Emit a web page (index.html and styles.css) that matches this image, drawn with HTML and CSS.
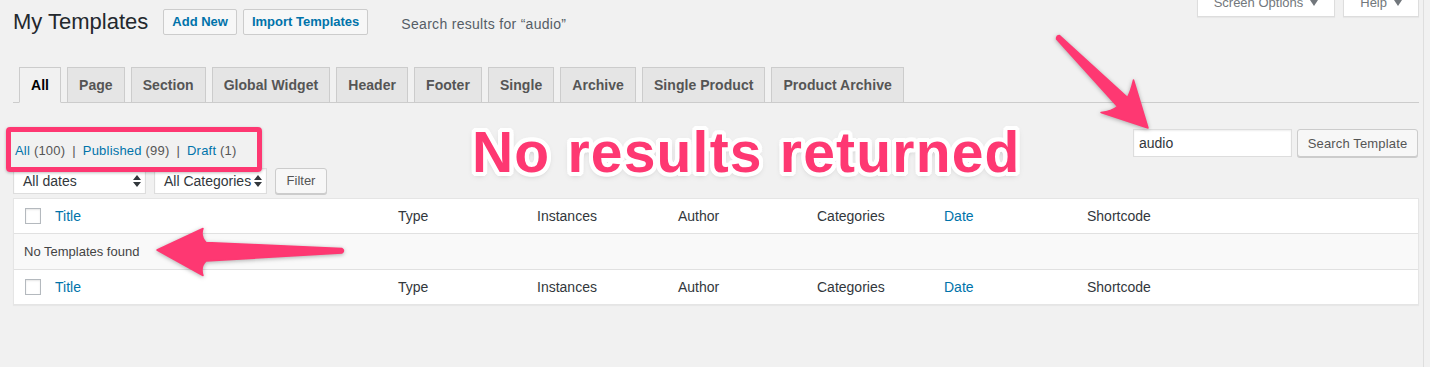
FILE: index.html
```html
<!DOCTYPE html>
<html lang="en">
<head>
  <meta charset="UTF-8">
  <title>My Templates</title>
  <link rel="stylesheet" href="styles.css">
</head>
<body>
  <div class="wrap">

    <div class="top">
      <div class="heading">
        <h1>My Templates</h1>
        <a class="title-action" href="#">Add New</a>
        <a class="title-action" href="#">Import Templates</a>
        <span class="subtitle">Search results for “audio”</span>
      </div>
      <div class="screen-meta">
        <button class="meta-link">Screen Options <span class="caret"></span></button>
        <button class="meta-link">Help <span class="caret"></span></button>
      </div>
    </div>

    <nav class="tabs">
      <a class="tab active" href="#">All</a>
      <a class="tab" href="#">Page</a>
      <a class="tab" href="#">Section</a>
      <a class="tab" href="#">Global Widget</a>
      <a class="tab" href="#">Header</a>
      <a class="tab" href="#">Footer</a>
      <a class="tab" href="#">Single</a>
      <a class="tab" href="#">Archive</a>
      <a class="tab" href="#">Single Product</a>
      <a class="tab" href="#">Product Archive</a>
    </nav>

    <div class="list-top">
      <ul class="subsubsub">
        <li><a href="#">All</a> <span class="count">(100)</span></li>
        <li class="sep">|</li>
        <li><a href="#">Published</a> <span class="count">(99)</span></li>
        <li class="sep">|</li>
        <li><a href="#">Draft</a> <span class="count">(1)</span></li>
        <!-- annotation frame -->
        <span class="note-box"></span>
      </ul>
      <div class="search-box">
        <input type="search" value="audio">
        <button class="btn search">Search Template</button>
      </div>
    </div>

    <div class="tablenav">
      <div class="select dates">All dates
        <svg width="8" height="12" viewBox="0 0 8 12"><path d="M4 0 L8 5 H0 Z M4 12 L0 7 H8 Z" fill="#32373c"/></svg>
      </div>
      <div class="select cats">All Categories
        <svg width="8" height="12" viewBox="0 0 8 12"><path d="M4 0 L8 5 H0 Z M4 12 L0 7 H8 Z" fill="#32373c"/></svg>
      </div>
      <button class="btn filter">Filter</button>
    </div>

    <table class="list-table">
      <colgroup>
        <col style="width:31px">
        <col style="width:343px">
        <col style="width:139px">
        <col style="width:141px">
        <col style="width:139px">
        <col style="width:127px">
        <col style="width:143px">
        <col>
      </colgroup>
      <thead>
        <tr>
          <th class="cb"><span class="check"></span></th>
          <th><a href="#">Title</a></th>
          <th>Type</th>
          <th>Instances</th>
          <th>Author</th>
          <th>Categories</th>
          <th><a href="#">Date</a></th>
          <th>Shortcode</th>
        </tr>
      </thead>
      <tbody>
        <tr class="empty">
          <td colspan="8">No Templates found</td>
        </tr>
      </tbody>
      <tfoot>
        <tr>
          <th class="cb"><span class="check"></span></th>
          <th><a href="#">Title</a></th>
          <th>Type</th>
          <th>Instances</th>
          <th>Author</th>
          <th>Categories</th>
          <th><a href="#">Date</a></th>
          <th>Shortcode</th>
        </tr>
      </tfoot>
    </table>

    <!-- screenshot annotations -->
    <div class="note-text">No results returned</div>
    <svg class="arrows" width="1430" height="367" viewBox="0 0 1430 367">
      <path d="M1148 128 L1101 112.5 Q1112 111 1117.5 106.5 L1056.5 39 Q1056.5 35.5 1059.5 35.5 L1127.5 97.5 Q1131 91 1133.5 80 Z"/>
      <path d="M157 250 L203 228.5 Q200 236 206 242.5 L342 248.5 Q345 250.5 342 253 L206 261 Q200 267 203 275.5 Z"/>
    </svg>

  </div>
</body>
</html>
```

FILE: styles.css
```css
* {
  margin: 0;
  padding: 0;
  box-sizing: border-box;
}

body {
  background-color: #f1f1f1;
  font-family: "Liberation Sans", Arial, sans-serif;
  font-size: 13px;
  color: #444;
  overflow: hidden;
}

a {
  color: #0073aa;
  text-decoration: none;
}

button {
  font-family: inherit;
  white-space: nowrap;
}

.wrap {
  position: relative;
  width: 1424px;
  min-height: 367px;
  padding: 0 4px 0 13px;
  border-right: 1px solid #dedede;
}

/* header */

.top {
  display: flex;
  align-items: flex-start;
}

.heading {
  flex: 1;
  display: flex;
  align-items: center;
  height: 30px;
  margin-top: 7px;
}

h1 {
  font-size: 22px;
  font-weight: 400;
  color: #23282d;
  margin-right: 15px;
}

.title-action {
  display: block;
  height: 26px;
  line-height: 24px;
  padding: 0 8px;
  margin-right: 6px;
  border: 1px solid #ccc;
  border-radius: 2px;
  background-color: #f7f7f7;
  font-weight: 700;
  font-size: 13px;
}

.subtitle {
  margin-left: 27px;
  padding-top: 4px;
  font-size: 14px;
  letter-spacing: .3px;
  color: #555d66;
}

.screen-meta {
  display: flex;
  gap: 8px;
  margin-top: -11px;
}

.meta-link {
  display: flex;
  align-items: center;
  height: 28px;
  padding: 0 16px;
  border: 1px solid #ddd;
  border-top: none;
  background-color: #fff;
  box-shadow: 0 1px 1px rgba(0, 0, 0, .04);
  color: #72777c;
  font-size: 13px;
}

.meta-link .caret {
  margin-left: 7px;
  border-left: 4px solid transparent;
  border-right: 4px solid transparent;
  border-top: 6px solid #72777c;
}

/* tabs */

.tabs {
  display: flex;
  margin-top: 30px;
  border-bottom: 1px solid #ccc;
}

.tab {
  margin: 0 0 -1px 6px;
  padding: 5px 11px;
  line-height: 24px;
  border: 1px solid #ccc;
  background-color: #e5e5e5;
  color: #555;
  font-size: 14px;
  font-weight: 700;
  letter-spacing: .05px;
}

.tab.active {
  background-color: #f1f1f1;
  border-bottom-color: #f1f1f1;
  color: #000;
}

/* filters */

.list-top {
  display: flex;
  justify-content: space-between;
  align-items: flex-start;
  margin-top: 26px;
  height: 32px;
}

.subsubsub {
  position: relative;
  display: flex;
  list-style: none;
  margin-top: 12px;
  padding-left: 2px;
  line-height: 20px;
  font-size: 13px;
  letter-spacing: .2px;
}

.subsubsub .count {
  color: #555;
}

.subsubsub .sep {
  padding: 0 7px;
  color: #555;
}

.note-box {
  position: absolute;
  left: -7px;
  top: -14px;
  width: 256px;
  height: 45px;
  border: 5px solid #fe3872;
  border-radius: 4px;
  box-shadow: 0 1px 3px rgba(0, 0, 0, .25);
}

.search-box {
  display: flex;
  gap: 5px;
  margin-right: 1px;
}

.search-box input {
  width: 159px;
  height: 28px;
  padding: 0 5px;
  border: 1px solid #ddd;
  box-shadow: inset 0 1px 2px rgba(0, 0, 0, .07);
  font-family: inherit;
  font-size: 14px;
  color: #32373c;
  outline: none;
}

.btn {
  height: 28px;
  padding: 0 10px;
  border: 1px solid #ccc;
  border-radius: 3px;
  background-color: #f7f7f7;
  box-shadow: 0 1px 0 #ccc;
  color: #555;
  font-size: 13px;
}

.btn.search {
  width: 121px;
  padding: 0;
  letter-spacing: .15px;
}

.tablenav {
  display: flex;
  align-items: center;
  gap: 8px;
  margin-top: 6px;
  height: 27px;
}

.select {
  display: flex;
  align-items: center;
  justify-content: space-between;
  height: 26px;
  padding: 0 4px 0 9px;
  border: 1px solid #ddd;
  background-color: #fff;
  box-shadow: inset 0 1px 2px rgba(0, 0, 0, .07);
  font-size: 14px;
  color: #32373c;
}

.select.dates {
  width: 133px;
}

.select.cats {
  width: 113px;
}

.btn.filter {
  height: 26px;
  width: 52px;
  padding: 0;
}

/* table */

.list-table {
  width: 100%;
  margin-top: 4px;
  table-layout: fixed;
  border-collapse: separate;
  border-spacing: 0;
  border: 1px solid #e5e5e5;
  background-color: #fff;
  box-shadow: 0 1px 1px rgba(0, 0, 0, .04);
}

.list-table th,
.list-table td {
  height: 35px;
  padding: 0 10px;
  text-align: left;
  font-weight: 400;
  font-size: 14px;
  color: #32373c;
}

.list-table thead th {
  border-bottom: 1px solid #e1e1e1;
}

.list-table tfoot th {
  border-top: 1px solid #e1e1e1;
}

.list-table th.cb {
  padding: 0 0 0 11px;
}

.check {
  display: block;
  width: 16px;
  height: 16px;
  border: 1px solid #b4b9be;
  background-color: #fff;
  box-shadow: inset 0 1px 2px rgba(0, 0, 0, .1);
}

.list-table .empty td {
  background-color: #f9f9f9;
  font-size: 13px;
  color: #444;
}

/* annotations */

.note-text {
  position: absolute;
  left: 472px;
  top: 124px;
  font-size: 57px;
  line-height: 57px;
  font-weight: 700;
  letter-spacing: 1.2px;
  color: #fe3872;
  white-space: nowrap;
  text-shadow:
    4px 0 #fff, -4px 0 #fff, 0 4px #fff, 0 -4px #fff,
    3px 3px #fff, -3px 3px #fff, 3px -3px #fff, -3px -3px #fff,
    2px 4px #fff, -2px 4px #fff, 2px -4px #fff, -2px -4px #fff,
    4px 2px #fff, -4px 2px #fff, 4px -2px #fff, -4px -2px #fff,
    0 2px 7px rgba(0, 0, 0, .35);
}

.arrows {
  position: absolute;
  left: 0;
  top: 0;
  pointer-events: none;
  filter: drop-shadow(0 1px 2px rgba(0, 0, 0, .3));
}

.arrows path {
  fill: #fe3872;
  stroke: #fe3872;
  stroke-width: 1.5;
  stroke-linejoin: round;
}
```
